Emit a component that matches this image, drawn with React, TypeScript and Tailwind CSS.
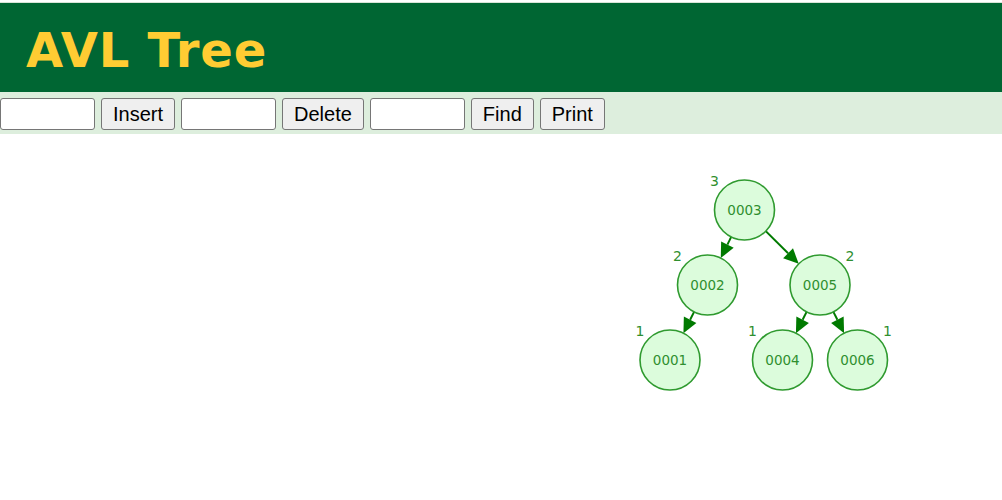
import React from "react";

type Node = { id: string; x: number; y: number; h: number; labelLeft: boolean };

// tree laid out in svg coords (origin = top of the drawing area)
const OFF = 134;
const nodes: Node[] = [
  { id: "0003", x: 744.5, y: 210 - OFF, h: 3, labelLeft: true },
  { id: "0002", x: 707.5, y: 285 - OFF, h: 2, labelLeft: true },
  { id: "0005", x: 820, y: 285 - OFF, h: 2, labelLeft: false },
  { id: "0001", x: 670, y: 360 - OFF, h: 1, labelLeft: true },
  { id: "0004", x: 782.5, y: 360 - OFF, h: 1, labelLeft: true },
  { id: "0006", x: 857.5, y: 360 - OFF, h: 1, labelLeft: false },
];

const edges: [string, string][] = [
  ["0003", "0002"],
  ["0003", "0005"],
  ["0002", "0001"],
  ["0005", "0004"],
  ["0005", "0006"],
];

const R = 30;

const Edge = ({ from, to }: { from: Node; to: Node }) => {
  const dx = to.x - from.x;
  const dy = to.y - from.y;
  const len = Math.hypot(dx, dy);
  const ux = dx / len;
  const uy = dy / len;
  const sx = from.x + ux * R;
  const sy = from.y + uy * R;
  const tx = to.x - ux * R;
  const ty = to.y - uy * R;
  const bx = tx - ux * 15;
  const by = ty - uy * 15;
  const px = -uy * 7;
  const py = ux * 7;
  return (
    <g>
      <line x1={sx} y1={sy} x2={bx} y2={by} stroke="#007a00" strokeWidth={2} />
      <polygon
        points={`${tx},${ty} ${bx + px},${by + py} ${bx - px},${by - py}`}
        fill="#007a00"
      />
    </g>
  );
};

const TreeView = () => {
  const byId = Object.fromEntries(nodes.map((n) => [n.id, n]));
  return (
    <svg width={1002} height={366} className="block" style={{ fontFamily: "'DejaVu Sans', sans-serif" }}>
      {edges.map(([a, b]) => (
        <Edge key={a + b} from={byId[a]} to={byId[b]} />
      ))}
      {nodes.map((n) => (
        <g key={n.id}>
          <circle cx={n.x} cy={n.y} r={R} fill="#dcfcdc" stroke="#2f9a2f" strokeWidth={1.6} />
          <text x={n.x} y={n.y + 5} textAnchor="middle" fontSize={13.5} fill="#2f8f2f">
            {n.id}
          </text>
          <text
            x={n.labelLeft ? n.x - 30 : n.x + 30}
            y={n.y - 24}
            textAnchor="middle"
            fontSize={14}
            fill="#2f8f2f"
          >
            {n.h}
          </text>
        </g>
      ))}
    </svg>
  );
};

const inputCls =
  "w-[95px] h-[32px] bg-white border border-[#767676] rounded-[3px] px-1 text-[20px]";
const btnCls =
  "h-[32px] px-[11px] bg-[#efefef] border border-[#767676] rounded-[3px] text-[20px] text-black leading-none";

export default function App() {
  return (
    <div className="w-[1002px] h-[500px] bg-white overflow-hidden" style={{ fontFamily: "'Liberation Sans', Arial, sans-serif" }}>
      <div className="h-[3px] bg-white border-b border-[#d8e4d8]" />
      <header className="h-[89px] bg-[#006633] flex items-center pl-[26px] pt-[4px]">
        <h1
          className="text-[48px] font-bold text-[#ffcc33] leading-none tracking-[0.8px]"
          style={{ fontFamily: "'DejaVu Sans', Verdana, sans-serif" }}
        >
          AVL Tree
        </h1>
      </header>
      <div className="h-[42px] bg-[#ddeedd] flex items-start pt-[6px] gap-[6px]">
        <input className={inputCls} />
        <button className={btnCls}>Insert</button>
        <input className={inputCls} />
        <button className={btnCls}>Delete</button>
        <input className={inputCls} />
        <button className={btnCls}>Find</button>
        <button className={btnCls}>Print</button>
      </div>
      <TreeView />
    </div>
  );
}
